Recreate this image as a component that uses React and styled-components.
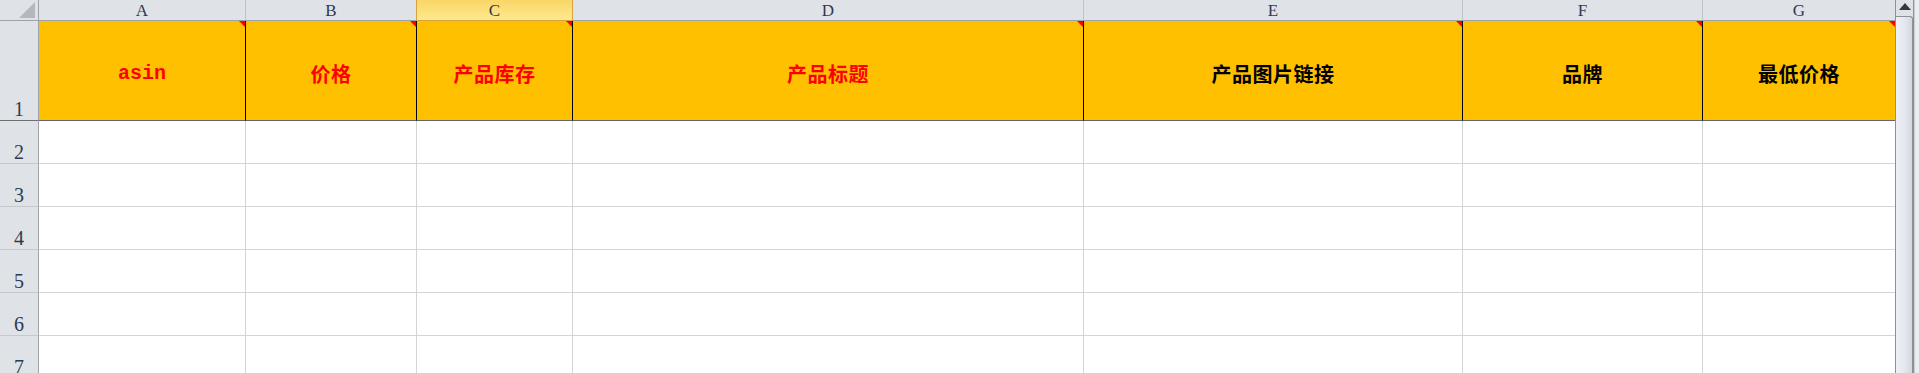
import React from "react";
import styled, { createGlobalStyle, css } from "styled-components";

const GlobalStyle = createGlobalStyle`
  html, body {
    margin: 0;
    padding: 0;
    overflow: hidden;
    background: #ffffff;
  }
  * { box-sizing: border-box; }
`;

const COLUMNS = [
  { letter: "A", title: "asin", red: true, mono: true, width: 207 },
  { letter: "B", title: "价格", red: true, width: 171 },
  { letter: "C", title: "产品库存", red: true, width: 156, selected: true },
  { letter: "D", title: "产品标题", red: true, width: 511 },
  { letter: "E", title: "产品图片链接", width: 379 },
  { letter: "F", title: "品牌", width: 240 },
  { letter: "G", title: "最低价格", width: 192, last: true },
];

const DATA_ROWS = [2, 3, 4, 5, 6, 7];

const Window = styled.div`
  display: flex;
  width: 1919px;
  height: 373px;
  overflow: hidden;
  background: #ffffff;
`;

const Sheet = styled.div`
  display: grid;
  grid-template-columns: 39px ${COLUMNS.map((c) => `${c.width}px`).join(" ")};
  grid-template-rows: 21px 100px repeat(${DATA_ROWS.length}, 43px);
  flex: none;
  align-content: start;
`;

const Corner = styled.div`
  display: flex;
  justify-content: flex-end;
  align-items: flex-end;
  padding: 0 3px 2px 0;
  background: #dfe3e8;
  border-right: 1px solid #9ea3a9;
  border-bottom: 1px solid #9ea3a9;
`;

const CornerTriangle = styled.span`
  width: 0;
  height: 0;
  border-bottom: 16px solid #b4b8bd;
  border-left: 16px solid transparent;
`;

const ColHeader = styled.div`
  display: flex;
  align-items: center;
  justify-content: center;
  background: #dfe3e8;
  border-bottom: 1px solid #9ea3a9;
  border-right: ${(p) => (p.$last ? "none" : "1px solid #bfc3c8")};
  font-family: "Liberation Serif", "DejaVu Serif", serif;
  font-size: 17px;
  line-height: 1;
  color: #2e3a4c;
  padding-top: 1px;
  ${(p) =>
    p.$selected &&
    css`
      background: linear-gradient(#f9d666, #ffe98f);
      border-right-color: #d9a23c;
      border-bottom-color: #d9a23c;
      box-shadow: -1px 0 0 #d9a23c;
    `}
`;

const RowHeader = styled.div`
  display: flex;
  justify-content: center;
  align-items: flex-end;
  padding-bottom: 1px;
  background: #dfe3e8;
  border-right: 1px solid #9ea3a9;
  border-bottom: 1px solid ${(p) => (p.$title ? "#6e6e6e" : "#c5c9ce")};
  font-family: "Liberation Serif", "DejaVu Serif", serif;
  font-size: 20px;
  line-height: 1;
  color: #2e3a4c;
`;

const TitleCell = styled.div`
  position: relative;
  display: flex;
  align-items: center;
  justify-content: center;
  padding-top: 5px;
  background: #ffc000;
  border-right: ${(p) => (p.$last ? "none" : "1px solid #000000")};
  border-bottom: 1px solid #666666;
  color: ${(p) => (p.$red ? "#ff0000" : "#000000")};
  font-family: ${(p) =>
    p.$mono
      ? `"Liberation Mono", "DejaVu Sans Mono", monospace`
      : `"Noto Sans CJK SC", "Noto Sans", sans-serif`};
  font-size: 20px;
  font-weight: 700;
  letter-spacing: ${(p) => (p.$mono ? "0" : "0.5px")};
  white-space: nowrap;
`;

const CommentMark = styled.span`
  position: absolute;
  top: 0;
  right: 0;
  width: 0;
  height: 0;
  border-top: 6px solid #ff0000;
  border-left: 6px solid transparent;
`;

const Cell = styled.div`
  background: #ffffff;
  border-right: ${(p) => (p.$last ? "none" : "1px solid #d4d4d4")};
  border-bottom: 1px solid #d4d4d4;
`;

const Scrollbar = styled.div`
  display: flex;
  flex: none;
  width: 24px;
  height: 373px;
  border-left: 1px solid #8c9197;
`;

const Track = styled.div`
  display: flex;
  flex-direction: column;
  width: 17px;
  background: #e9ecf0;
`;

const ArrowButton = styled.div`
  display: flex;
  align-items: center;
  justify-content: center;
  height: 16px;
  background: #dfe3e8;
  padding-bottom: 4px;
`;

const Thumb = styled.div`
  flex: 1;
  border-top: 1px solid #8c9197;
  border-right: 1px solid #8c9197;
  border-top-right-radius: 3px;
  background: linear-gradient(to right, #eef1f6, #e4e8ee 55%, #d3d7de);
`;

const Edge = styled.div`
  flex: 1;
  border-left: 1px solid #8c9197;
  background: linear-gradient(to right, #b9bec5, #e9ecf0 30%, #eceef2);
`;

function UpArrow() {
  return (
    <svg width="12" height="7" viewBox="0 0 12 7">
      <polygon points="0,7 12,7 6,0" fill="#35383d" />
    </svg>
  );
}

export default function App() {
  return (
    <>
      <GlobalStyle />
      <Window>
        <Sheet>
          <Corner>
            <CornerTriangle />
          </Corner>
          {COLUMNS.map((c) => (
            <ColHeader key={c.letter} $selected={c.selected} $last={c.last}>
              {c.letter}
            </ColHeader>
          ))}

          <RowHeader $title>1</RowHeader>
          {COLUMNS.map((c) => (
            <TitleCell key={c.letter} $red={c.red} $mono={c.mono} $last={c.last}>
              {c.title}
              <CommentMark />
            </TitleCell>
          ))}

          {DATA_ROWS.map((r) => (
            <React.Fragment key={r}>
              <RowHeader>{r}</RowHeader>
              {COLUMNS.map((c) => (
                <Cell key={c.letter} $last={c.last} />
              ))}
            </React.Fragment>
          ))}
        </Sheet>
        <Scrollbar>
          <Track>
            <ArrowButton>
              <UpArrow />
            </ArrowButton>
            <Thumb />
          </Track>
          <Edge />
        </Scrollbar>
      </Window>
    </>
  );
}
